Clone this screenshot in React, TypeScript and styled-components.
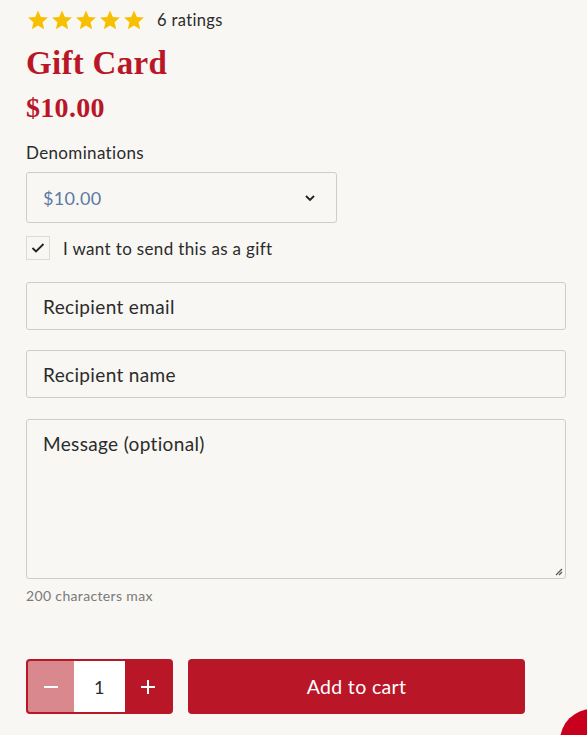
import React from "react";
import styled, { createGlobalStyle } from "styled-components";

const Global = createGlobalStyle`
  html, body { margin: 0; padding: 0; background: #f8f7f3; }
  body { font-family: Lato, "Open Sans", sans-serif; color: #2b2b2b; letter-spacing: 0.35px; }
  * { box-sizing: border-box; }
`;

const Page = styled.div`
  width: 587px;
  height: 735px;
  padding: 9px 22px 0 26px;
  display: flex;
  flex-direction: column;
  overflow: hidden;
`;

const Rating = styled.div`
  display: flex;
  align-items: center;
  height: 22px;
  gap: 12px;
  padding-left: 1px;
`;

const Stars = styled.div`
  display: flex;
  gap: 2px;
`;

const RatingText = styled.span`
  font-size: 16.5px;
  color: #2b2b2b;
`;

const Title = styled.h1`
  margin: 12px 0 0;
  font-family: "Liberation Serif", serif;
  font-weight: 700;
  font-size: 33px;
  line-height: 40px;
  color: #b91628;
  letter-spacing: 0.3px;
`;

const Price = styled.div`
  margin-top: 8px;
  font-family: "Liberation Serif", serif;
  font-weight: 700;
  font-size: 28px;
  line-height: 34px;
  color: #b91628;
  letter-spacing: 0.3px;
`;

const Label = styled.div`
  margin-top: 17px;
  font-size: 17px;
  line-height: 22px;
`;

const Select = styled.div`
  margin-top: 8px;
  width: 311px;
  height: 51px;
  border: 1px solid #cfcdca;
  border-radius: 3px;
  display: flex;
  align-items: center;
  justify-content: space-between;
  padding: 0 20px 0 16px;
  font-size: 18px;
  color: #5d7aa3;
`;

const CheckRow = styled.label`
  margin-top: 13px;
  display: flex;
  align-items: center;
  gap: 13px;
  font-size: 17px;
  height: 24px;
`;

const Box = styled.span`
  width: 24px;
  height: 24px;
  border: 1px solid #dcdad6;
  background: #f8f7f3;
  display: flex;
  align-items: center;
  justify-content: center;
`;

const Field = styled.div<{ $h: number; $top: number; $align?: string }>`
  margin-top: ${(p) => p.$top}px;
  width: 540px;
  height: ${(p) => p.$h}px;
  border: 1px solid #cfcdca;
  border-radius: 3px;
  display: flex;
  align-items: ${(p) => p.$align || "center"};
  padding: ${(p) => (p.$align ? "12px 16px" : "0 16px")};
  font-size: 19px;
  color: #2b2b2b;
  position: relative;
`;

const Grip = styled.svg`
  position: absolute;
  right: 2px;
  bottom: 2px;
`;

const Hint = styled.div`
  margin-top: 8px;
  font-size: 14px;
  color: #7a7a7a;
`;

const Actions = styled.div`
  margin-top: 55px;
  display: flex;
  gap: 15px;
`;

const Qty = styled.div`
  width: 147px;
  height: 55px;
  border: 2px solid #b91628;
  border-radius: 4px;
  display: flex;
  overflow: hidden;
  background: #b91628;
`;

const QtyBtn = styled.div<{ $light?: boolean }>`
  width: 46px;
  display: flex;
  align-items: center;
  justify-content: center;
  background: ${(p) => (p.$light ? "#d9888d" : "#b91628")};
  color: #fff;
`;

const QtyVal = styled.div`
  width: 51px;
  background: #fff;
  display: flex;
  align-items: center;
  justify-content: center;
  font-size: 18px;
  color: #2b2b2b;
`;

const Cart = styled.button`
  width: 337px;
  height: 55px;
  border: none;
  border-radius: 4px;
  background: #b91628;
  color: #fff;
  font-family: inherit;
  font-size: 19.5px;
  letter-spacing: 0.35px;
`;

const Bubble = styled.div`
  position: fixed;
  left: 560px;
  top: 709px;
  width: 64px;
  height: 64px;
  border-radius: 50%;
  background: #c8001e;
`;

const Star = () => (
  <svg width="22" height="22" viewBox="0 0 24 24">
    <path
      d="M12 1.5l3.1 7.1 7.7.7-5.8 5.1 1.7 7.6L12 18l-6.7 4 1.7-7.6-5.8-5.1 7.7-.7z"
      fill="#f6c000"
    />
  </svg>
);

export default function App() {
  return (
    <>
      <Global />
      <Page>
        <Rating>
          <Stars>
            {[0, 1, 2, 3, 4].map((i) => (
              <Star key={i} />
            ))}
          </Stars>
          <RatingText>6 ratings</RatingText>
        </Rating>
        <Title>Gift Card</Title>
        <Price>$10.00</Price>
        <Label>Denominations</Label>
        <Select>
          <span>$10.00</span>
          <svg width="12" height="8" viewBox="0 0 12 8">
            <path d="M2 2l4 4 4-4" stroke="#222" strokeWidth="1.8" fill="none" />
          </svg>
        </Select>
        <CheckRow>
          <Box>
            <svg width="14" height="12" viewBox="0 0 14 12">
              <path d="M1.5 6l3.5 3.5L12.5 2" stroke="#222" strokeWidth="1.8" fill="none" />
            </svg>
          </Box>
          I want to send this as a gift
        </CheckRow>
        <Field $h={48} $top={22}>Recipient email</Field>
        <Field $h={48} $top={20}>Recipient name</Field>
        <Field $h={160} $top={21} $align="flex-start">
          Message (optional)
          <Grip width="10" height="10" viewBox="0 0 10 10">
            <path d="M9 3L3 9M9 6L6 9" stroke="#555" strokeWidth="1.2" />
          </Grip>
        </Field>
        <Hint>200 characters max</Hint>
        <Actions>
          <Qty>
            <QtyBtn $light>
              <svg width="14" height="2" viewBox="0 0 14 2">
                <rect width="14" height="2" fill="#fff" />
              </svg>
            </QtyBtn>
            <QtyVal>1</QtyVal>
            <QtyBtn>
              <svg width="14" height="14" viewBox="0 0 14 14">
                <path d="M7 0v14M0 7h14" stroke="#fff" strokeWidth="2" />
              </svg>
            </QtyBtn>
          </Qty>
          <Cart>Add to cart</Cart>
        </Actions>
      </Page>
      <Bubble />
    </>
  );
}
